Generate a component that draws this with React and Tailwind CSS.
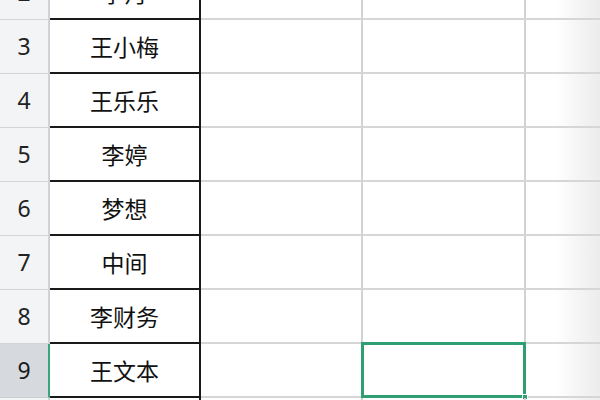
import React from "react";

const rows = [
  { n: "2", name: "李丹" },
  { n: "3", name: "王小梅" },
  { n: "4", name: "王乐乐" },
  { n: "5", name: "李婷" },
  { n: "6", name: "梦想" },
  { n: "7", name: "中间" },
  { n: "8", name: "李财务" },
  { n: "9", name: "王文本", sel: true },
  { n: "", name: "" },
];

export default function App() {
  return (
    <div
      className="w-[600px] h-[400px] overflow-hidden bg-white"
      style={{ fontFamily: '"Noto Sans", "Noto Sans CJK SC", sans-serif' }}
    >
      <div className="flex flex-col mt-[-34px]">
        {rows.map((r, i) => (
          <div key={i} className="flex h-[54px] shrink-0">
            <div
              className={
                r.sel
                  ? "w-[50px] shrink-0 flex items-center justify-center bg-[#d6dade] border-r-2 border-r-[#3aa57a] border-b border-b-[#c9ccd0] text-[23px] text-[#1a1a1a]"
                  : "w-[50px] shrink-0 flex items-center justify-center bg-[#f3f4f6] border-r-2 border-r-[#cfd2d6] border-b border-b-[#d2d4d8] text-[23px] text-[#222]"
              }
            >
              {r.n}
            </div>
            <div className="w-[151px] shrink-0 flex items-center justify-center border-b-2 border-b-[#1a1a1a] border-r-2 border-r-[#1a1a1a] text-[23px] text-[#111] pt-[2px]">
              {r.name}
            </div>
            <div className="w-[162px] shrink-0 border-b-2 border-b-[#d6d6d6] border-r-2 border-r-[#d2d2d2]" />
            <div className="relative w-[163px] shrink-0 border-b-2 border-b-[#d6d6d6] border-r-2 border-r-[#d2d2d2]">
              {r.sel && (
                <div className="absolute left-[-2px] top-[-2px] right-[-2px] bottom-[-2px] border-[3px] border-[#2f9e72]">
                  <div className="absolute right-[-5px] bottom-[-5px] w-[6px] h-[6px] bg-[#2f9e72] border border-white" />
                </div>
              )}
            </div>
            <div className="flex-1 border-b-2 border-b-[#d6d6d6] bg-gradient-to-r from-white from-40% to-[#ececec]" />
          </div>
        ))}
      </div>
    </div>
  );
}
